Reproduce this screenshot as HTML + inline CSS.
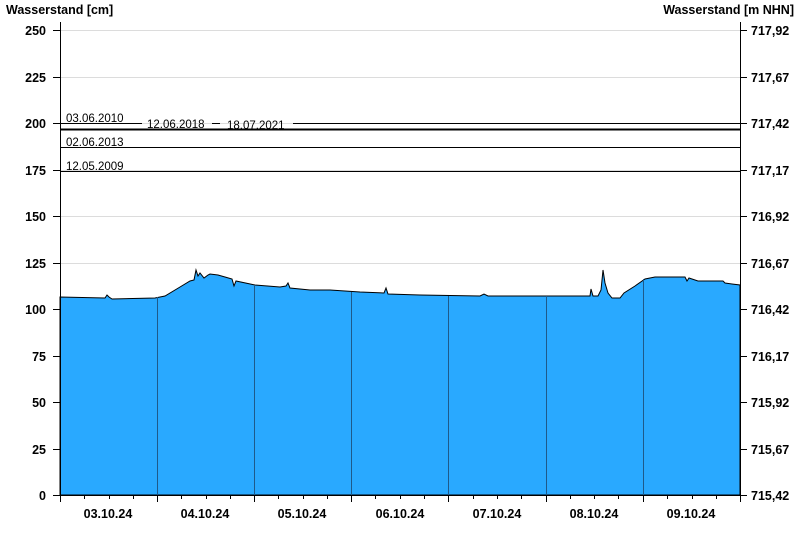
<!DOCTYPE html>
<html><head><style>
body{margin:0;background:#fff;}
svg{display:block;font-family:"Liberation Sans",Arial,sans-serif;}
.b{font-weight:bold;font-size:12.5px;fill:#000;}
.s{font-size:11.5px;fill:#000;}
</style></head><body>
<svg width="800" height="550" viewBox="0 0 800 550">
<rect width="800" height="550" fill="#fff"/>
<g stroke="#dcdcdc" stroke-width="1">
<line x1="60" x2="740" y1="30.5" y2="30.5"/><line x1="60" x2="740" y1="77.5" y2="77.5"/>
<line x1="60" x2="740" y1="123.5" y2="123.5"/><line x1="60" x2="740" y1="170.5" y2="170.5"/>
<line x1="60" x2="740" y1="216.5" y2="216.5"/><line x1="60" x2="740" y1="263.5" y2="263.5"/>
<line x1="60" x2="740" y1="309.5" y2="309.5"/><line x1="60" x2="740" y1="356.5" y2="356.5"/>
<line x1="60" x2="740" y1="402.5" y2="402.5"/><line x1="60" x2="740" y1="449.5" y2="449.5"/>
</g>
<path fill="#29a9ff" stroke="#000" stroke-width="1" d="M60,495 L60,297 L105,298 L107,295 L109,297 L112,299 L155,298 L165,296 L180,287 L190,281 L194,280 L196,270 L198,276 L200,273 L204,278 L208,275 L210,274 L218,275 L225,277 L232,279 L234,286 L236,281 L255,285 L280,287 L286,286 L288,283 L290,288 L310,290 L330,290 L360,292 L384,293 L386,288 L388,294 L420,295 L480,296 L484,294 L488,296 L590,296 L591,289 L593,296 L598,296 L601,290 L603,270 L605,283 L608,293 L612,298 L620,298 L624,293 L635,286 L645,279 L655,277 L685,277 L687,281 L689,278 L698,281 L723,281 L725,283 L732,284 L740,285 L740,495 Z"/>
<g stroke="#1e5a8a" stroke-width="1">
<line x1="157.5" x2="157.5" y1="297" y2="495"/><line x1="254.5" x2="254.5" y1="285" y2="495"/>
<line x1="351.5" x2="351.5" y1="292" y2="495"/><line x1="448.5" x2="448.5" y1="296" y2="495"/>
<line x1="546.5" x2="546.5" y1="296" y2="495"/><line x1="643.5" x2="643.5" y1="279" y2="495"/>
</g>
<g stroke="#000" stroke-width="1">
<line x1="60" x2="142" y1="123.5" y2="123.5"/><line x1="212" x2="220" y1="123.5" y2="123.5"/>
<line x1="293" x2="740" y1="123.5" y2="123.5"/>
<line x1="60" x2="740" y1="129.5" y2="129.5" stroke-width="2"/>
<line x1="60" x2="740" y1="147.5" y2="147.5"/>
<line x1="60" x2="740" y1="171.5" y2="171.5"/>
</g>
<text class="s" x="66" y="122">03.06.2010</text>
<text class="s" x="147" y="128">12.06.2018</text>
<text class="s" x="227" y="129">18.07.2021</text>
<text class="s" x="66" y="146">02.06.2013</text>
<text class="s" x="66" y="170">12.05.2009</text>
<g stroke="#000" stroke-width="1">
<line x1="60.5" x2="60.5" y1="22" y2="502"/><line x1="740.5" x2="740.5" y1="22" y2="495"/>
<line x1="60" x2="741" y1="495.5" y2="495.5"/>
</g>
<g stroke="#000">
<path d="M53,30.5h7M53,77.5h7M53,123.5h7M53,170.5h7M53,216.5h7M53,263.5h7M53,309.5h7M53,356.5h7M53,402.5h7M53,449.5h7M53,495.5h7"/>
<path d="M740,30.5h7M740,77.5h7M740,123.5h7M740,170.5h7M740,216.5h7M740,263.5h7M740,309.5h7M740,356.5h7M740,402.5h7M740,449.5h7M740,495.5h7"/>
<path d="M157.5,495v7M254.5,495v7M351.5,495v7M448.5,495v7M546.5,495v7M643.5,495v7M740.5,495v7"/>
<path d="M84.5,495v4M109.5,495v4M133.5,495v4M181.5,495v4M206.5,495v4M230.5,495v4M278.5,495v4M303.5,495v4M327.5,495v4M375.5,495v4M400.5,495v4M424.5,495v4M473.5,495v4M497.5,495v4M521.5,495v4M570.5,495v4M594.5,495v4M618.5,495v4M667.5,495v4M692.5,495v4M716.5,495v4"/>
</g>
<text class="b" x="6" y="14">Wasserstand [cm]</text>
<text class="b" x="794" y="14" text-anchor="end">Wasserstand [m NHN]</text>
<g class="b" text-anchor="end">
<text x="46" y="35">250</text><text x="46" y="82">225</text><text x="46" y="128">200</text>
<text x="46" y="175">175</text><text x="46" y="221">150</text><text x="46" y="268">125</text>
<text x="46" y="314">100</text><text x="46" y="361">75</text><text x="46" y="407">50</text>
<text x="46" y="454">25</text><text x="46" y="500">0</text>
</g>
<g class="b">
<text x="751" y="35">717,92</text><text x="751" y="82">717,67</text><text x="751" y="128">717,42</text>
<text x="751" y="175">717,17</text><text x="751" y="221">716,92</text><text x="751" y="268">716,67</text>
<text x="751" y="314">716,42</text><text x="751" y="361">716,17</text><text x="751" y="407">715,92</text>
<text x="751" y="454">715,67</text><text x="751" y="500">715,42</text>
</g>
<g class="b" text-anchor="middle">
<text x="108" y="518">03.10.24</text><text x="205" y="518">04.10.24</text><text x="302" y="518">05.10.24</text>
<text x="400" y="518">06.10.24</text><text x="497" y="518">07.10.24</text><text x="594" y="518">08.10.24</text>
<text x="691" y="518">09.10.24</text>
</g>
</svg>
</body></html>
